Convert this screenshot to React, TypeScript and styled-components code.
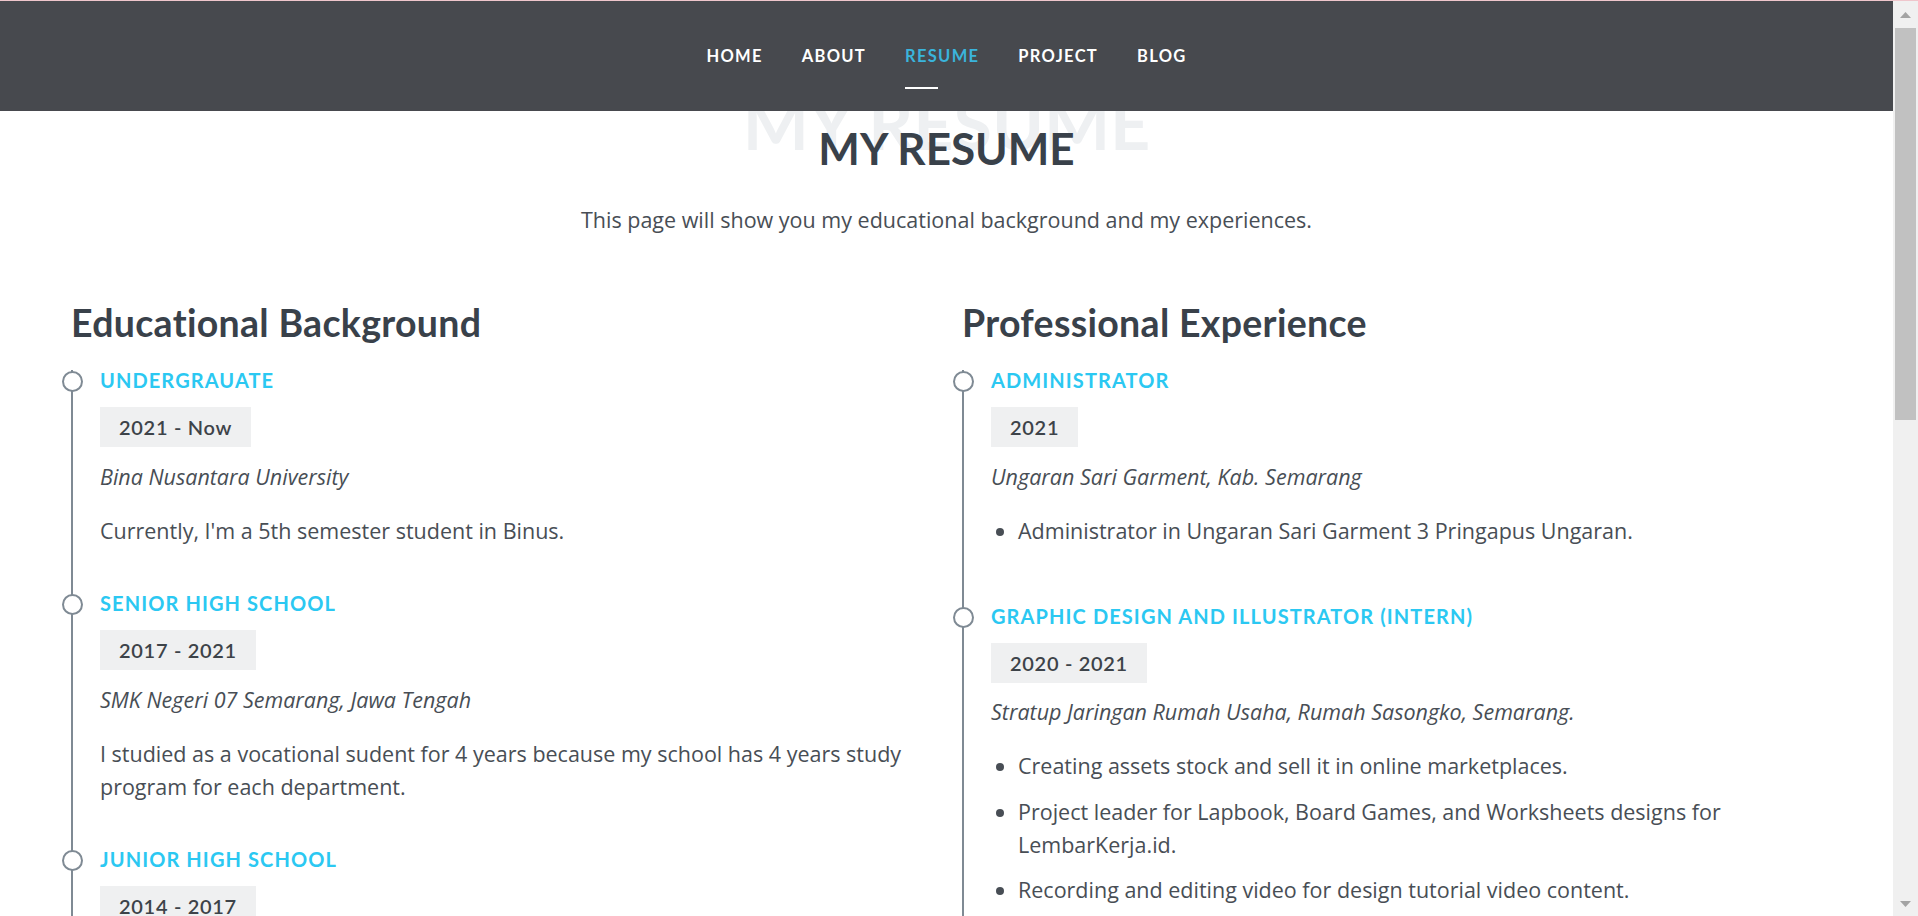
import React from "react";
import styled, { createGlobalStyle } from "styled-components";

const GlobalStyle = createGlobalStyle`
  html, body {
    margin: 0;
    padding: 0;
    height: 100%;
    overflow: hidden;
    background: #ffffff;
  }
  body {
    font-family: "Open Sans", "Noto Sans", sans-serif;
    color: #484e55;
  }
  #root { height: 100%; }
  *, *::before, *::after { box-sizing: border-box; }
`;

const headingFont = `"Lato", "Noto Sans", sans-serif`;

const Frame = styled.div`
  height: 100vh;
  display: flex;
  flex-direction: column;
  border-top: 1px solid #efc6cc;
`;

const Viewport = styled.div`
  flex: 1;
  min-height: 0;
  display: flex;
`;

const Page = styled.div`
  flex: 1;
  min-width: 0;
  overflow: hidden;
`;

/* drawn window scrollbar */
const ScrollRail = styled.div`
  width: 25px;
  flex: none;
  background: #f0f0f0;
  display: flex;
  flex-direction: column;
`;

const RailButton = styled.div<{ $height: number }>`
  height: ${(p) => p.$height}px;
  flex: none;
  display: flex;
  align-items: center;
  justify-content: center;
`;

const RailTrack = styled.div`
  flex: 1;
  min-height: 0;
`;

const RailThumb = styled.div`
  height: 392px;
  margin: 0 2px;
  background: #c1c1c1;
`;

const Arrow = ({ down }: { down?: boolean }) => (
  <svg width="11" height="6" viewBox="0 0 11 6" aria-hidden="true">
    <polygon points={down ? "0,0 11,0 5.5,6" : "0,6 11,6 5.5,0"} fill="#a3a3a3" />
  </svg>
);

const NavBar = styled.header`
  position: relative;
  z-index: 10;
  height: 110px;
  background: #47494e;
  display: flex;
  justify-content: center;
  align-items: flex-start;
  padding-top: 42.5px;
`;

const NavList = styled.nav`
  display: flex;
  gap: 39px;
`;

const NavLink = styled.a<{ $active?: boolean }>`
  position: relative;
  font-family: ${headingFont};
  font-weight: 700;
  font-size: 16.5px;
  line-height: 24px;
  letter-spacing: 1.3px;
  text-transform: uppercase;
  text-decoration: none;
  color: ${(p) => (p.$active ? "#3ab4dc" : "#ffffff")};

  &::after {
    content: "";
    display: ${(p) => (p.$active ? "block" : "none")};
    position: absolute;
    left: 0;
    top: 43px;
    width: 33px;
    height: 2px;
    background: #ffffff;
  }
`;

const Main = styled.main`
  padding: 9px 71px 40px;
`;

const TitleBlock = styled.div`
  position: relative;
  text-align: center;
`;

const BgWord = styled.span`
  position: absolute;
  left: 0;
  right: 0;
  top: -32px;
  z-index: 0;
  font-family: ${headingFont};
  font-weight: 700;
  font-size: 70px;
  line-height: 1;
  text-transform: uppercase;
  color: #eef0f2;
  white-space: nowrap;
`;

const PageTitle = styled.h2`
  position: relative;
  z-index: 1;
  margin: 0;
  font-family: ${headingFont};
  font-weight: 700;
  font-size: 44px;
  line-height: 56px;
  text-transform: uppercase;
  color: #39414a;
`;

const Lead = styled.p`
  margin: 26.5px 0 0;
  font-size: 21.5px;
  line-height: 33px;
  color: #484e55;
`;

const Columns = styled.div`
  display: grid;
  grid-template-columns: 891px 1fr;
  margin-top: 64.5px;
`;

const Column = styled.section`
  min-width: 0;
`;

const ColumnTitle = styled.h3`
  margin: 0 0 25px;
  font-family: ${headingFont};
  font-weight: 700;
  font-size: 37.5px;
  line-height: 45px;
  letter-spacing: 0.3px;
  color: #39414a;
`;

const Item = styled.div`
  position: relative;
  border-left: 2px solid #7f8a94;
  padding: 0 0 26.5px 27px;

  &:last-child {
    padding-bottom: 0;
  }

  &::before {
    content: "";
    position: absolute;
    left: -11.5px;
    top: 1px;
    width: 21px;
    height: 21px;
    border-radius: 50%;
    background: #ffffff;
    border: 2px solid #7f8a94;
  }
`;

const ItemTitle = styled.h4`
  margin: 0 0 17px;
  font-family: ${headingFont};
  font-weight: 700;
  font-size: 20px;
  line-height: 20px;
  letter-spacing: 1.1px;
  text-transform: uppercase;
  color: #2bc8f2;
`;

const DateTag = styled.h5`
  display: block;
  width: fit-content;
  margin: 0 0 12.5px;
  padding: 6px 19px;
  background: #eff0f1;
  font-family: ${headingFont};
  font-weight: 600;
  font-size: 20px;
  line-height: 28px;
  letter-spacing: 0.7px;
  color: #3d4349;
`;

const Place = styled.p`
  margin: 0 0 21px;
  font-style: italic;
  font-size: 21.5px;
  line-height: 33px;
`;

const Text = styled.p`
  margin: 0 0 20px;
  font-size: 21.5px;
  line-height: 33px;
`;

const Bullets = styled.ul`
  margin: 0 0 20px;
  padding-left: 27px;
  font-size: 21.5px;
  line-height: 33px;

  li {
    padding-bottom: 12.5px;
  }
`;

type Entry = {
  title: string;
  date: string;
  place?: string;
  text?: string;
  bullets?: string[];
};

const education: Entry[] = [
  {
    title: "Undergrauate",
    date: "2021 - Now",
    place: "Bina Nusantara University",
    text: "Currently, I'm a 5th semester student in Binus.",
  },
  {
    title: "Senior High School",
    date: "2017 - 2021",
    place: "SMK Negeri 07 Semarang, Jawa Tengah",
    text: "I studied as a vocational sudent for 4 years because my school has 4 years study program for each department.",
  },
  {
    title: "Junior High School",
    date: "2014 - 2017",
  },
];

const experience: Entry[] = [
  {
    title: "Administrator",
    date: "2021",
    place: "Ungaran Sari Garment, Kab. Semarang",
    bullets: ["Administrator in Ungaran Sari Garment 3 Pringapus Ungaran."],
  },
  {
    title: "Graphic Design and Illustrator (Intern)",
    date: "2020 - 2021",
    place: "Stratup Jaringan Rumah Usaha, Rumah Sasongko, Semarang.",
    bullets: [
      "Creating assets stock and sell it in online marketplaces.",
      "Project leader for Lapbook, Board Games, and Worksheets designs for LembarKerja.id.",
      "Recording and editing video for design tutorial video content.",
    ],
  },
];

const ResumeEntry = ({ entry }: { entry: Entry }) => (
  <Item>
    <ItemTitle>{entry.title}</ItemTitle>
    <DateTag>{entry.date}</DateTag>
    {entry.place && <Place>{entry.place}</Place>}
    {entry.text && <Text>{entry.text}</Text>}
    {entry.bullets && (
      <Bullets>
        {entry.bullets.map((b) => (
          <li key={b}>{b}</li>
        ))}
      </Bullets>
    )}
  </Item>
);

const navItems = ["Home", "About", "Resume", "Project", "Blog"];

export default function App() {
  return (
    <>
      <GlobalStyle />
      <Frame>
        <Viewport>
          <Page>
            <NavBar>
              <NavList>
                {navItems.map((n) => (
                  <NavLink key={n} href="#" $active={n === "Resume"}>
                    {n}
                  </NavLink>
                ))}
              </NavList>
            </NavBar>
            <Main>
              <TitleBlock>
                <BgWord aria-hidden="true">My Resume</BgWord>
                <PageTitle>My Resume</PageTitle>
                <Lead>This page will show you my educational background and my experiences.</Lead>
              </TitleBlock>
              <Columns>
                <Column>
                  <ColumnTitle>Educational Background</ColumnTitle>
                  {education.map((e) => (
                    <ResumeEntry key={e.title} entry={e} />
                  ))}
                </Column>
                <Column>
                  <ColumnTitle>Professional Experience</ColumnTitle>
                  {experience.map((e) => (
                    <ResumeEntry key={e.title} entry={e} />
                  ))}
                </Column>
              </Columns>
            </Main>
          </Page>
          <ScrollRail>
            <RailButton $height={27}>
              <Arrow />
            </RailButton>
            <RailTrack>
              <RailThumb />
            </RailTrack>
            <RailButton $height={25}>
              <Arrow down />
            </RailButton>
          </ScrollRail>
        </Viewport>
      </Frame>
    </>
  );
}
